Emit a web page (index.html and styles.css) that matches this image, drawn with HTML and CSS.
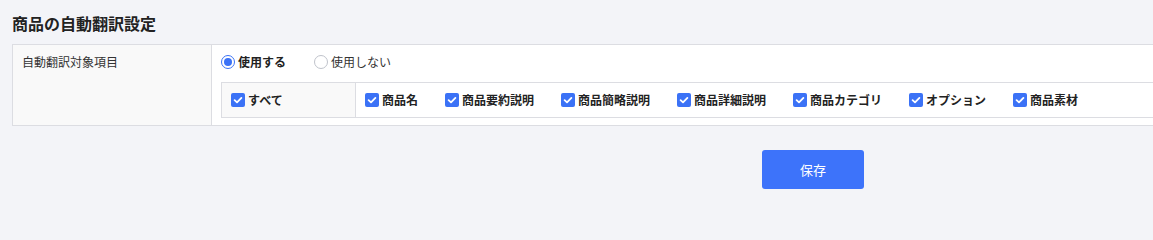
FILE: index.html
```html
<!DOCTYPE html>
<html lang="ja">
<head>
<meta charset="utf-8">
<title>商品の自動翻訳設定</title>
<link rel="stylesheet" href="styles.css">
</head>
<body>
<div class="viewport">
<div class="page">
  <h1 class="title">商品の自動翻訳設定</h1>
  <div class="form-table">
    <div class="label-cell">自動翻訳対象項目</div>
    <div class="value-cell">
      <div class="radio-row">
        <label class="radio checked"><span class="radio-dot"></span><span class="radio-text">使用する</span></label>
        <label class="radio"><span class="radio-dot"></span><span class="radio-text">使用しない</span></label>
      </div>
      <div class="check-table">
        <div class="check-all">
          <label class="check"><span class="box"><svg viewBox="0 0 14 14"><path d="M3.6 7.2 L6 9.4 L10.4 4.9" /></svg></span><span class="check-text">すべて</span></label>
        </div>
        <div class="check-items">
          <label class="check"><span class="box"><svg viewBox="0 0 14 14"><path d="M3.6 7.2 L6 9.4 L10.4 4.9" /></svg></span><span class="check-text">商品名</span></label>
          <label class="check"><span class="box"><svg viewBox="0 0 14 14"><path d="M3.6 7.2 L6 9.4 L10.4 4.9" /></svg></span><span class="check-text">商品要約説明</span></label>
          <label class="check"><span class="box"><svg viewBox="0 0 14 14"><path d="M3.6 7.2 L6 9.4 L10.4 4.9" /></svg></span><span class="check-text">商品簡略説明</span></label>
          <label class="check"><span class="box"><svg viewBox="0 0 14 14"><path d="M3.6 7.2 L6 9.4 L10.4 4.9" /></svg></span><span class="check-text">商品詳細説明</span></label>
          <label class="check"><span class="box"><svg viewBox="0 0 14 14"><path d="M3.6 7.2 L6 9.4 L10.4 4.9" /></svg></span><span class="check-text">商品カテゴリ</span></label>
          <label class="check"><span class="box"><svg viewBox="0 0 14 14"><path d="M3.6 7.2 L6 9.4 L10.4 4.9" /></svg></span><span class="check-text">オプション</span></label>
          <label class="check"><span class="box"><svg viewBox="0 0 14 14"><path d="M3.6 7.2 L6 9.4 L10.4 4.9" /></svg></span><span class="check-text">商品素材</span></label>
        </div>
      </div>
    </div>
  </div>
  <div class="actions">
    <button class="save-btn" type="button">保存</button>
  </div>
</div>
</div>
</body>
</html>
```
FILE: styles.css
```css
html, body {
  margin: 0;
  padding: 0;
  background: #f3f4f8;
}
body {
  font-family: "Noto Sans CJK JP", "Noto Sans", sans-serif;
  color: #333;
  min-height: 231px;
}
.viewport {
  width: 100%;
  overflow: hidden;
}
.page {
  width: 1602px;
  padding: 12px;
}
.title {
  margin: 0 0 10px;
  font-size: 16px;
  line-height: 22px;
  font-weight: 700;
  color: #222;
}
.form-table {
  display: grid;
  grid-template-columns: 199px 1fr;
  border: 1px solid #dcdde2;
  background: #fff;
}
.label-cell {
  background: #f9f9f9;
  border-right: 1px solid #dcdde2;
  padding: 7px 9px;
  font-size: 12px;
  line-height: 20px;
  color: #333;
}
.value-cell {
  padding: 7px 9px 7px 9px;
}
.radio-row {
  display: flex;
  align-items: center;
  gap: 28px;
  height: 20px;
  margin-bottom: 10px;
}
.radio {
  display: flex;
  align-items: center;
  gap: 3px;
  font-size: 12px;
  line-height: 20px;
  color: #333;
}
.radio-dot {
  width: 12px;
  height: 12px;
  border: 1px solid #bfc3cb;
  border-radius: 50%;
  background: #fff;
  position: relative;
}
.radio.checked .radio-dot {
  border-color: #3b72f6;
}
.radio.checked .radio-dot::after {
  content: "";
  position: absolute;
  left: 2px;
  top: 2px;
  width: 8px;
  height: 8px;
  border-radius: 50%;
  background: #3b72f6;
}
.radio.checked .radio-text {
  font-weight: 700;
  color: #222;
}
.check-table {
  display: flex;
  border: 1px solid #dcdde2;
  height: 34px;
}
.check-all {
  width: 124px;
  background: #f9f9f9;
  border-right: 1px solid #dcdde2;
  padding-left: 9px;
  display: flex;
  align-items: center;
}
.check-items {
  display: flex;
  align-items: center;
  padding-left: 9px;
  gap: 27px;
}
.check {
  display: flex;
  align-items: center;
  gap: 3px;
  font-size: 12px;
  line-height: 20px;
  font-weight: 700;
  color: #222;
}
.box {
  width: 14px;
  height: 14px;
  border-radius: 2px;
  background: #3b72f6;
  display: block;
}
.box svg {
  display: block;
  width: 14px;
  height: 14px;
}
.box path {
  fill: none;
  stroke: #fff;
  stroke-width: 1.8;
  stroke-linecap: round;
  stroke-linejoin: round;
}
.actions {
  display: flex;
  justify-content: center;
  margin-top: 24px;
}
.save-btn {
  width: 102px;
  height: 39px;
  border: none;
  border-radius: 3px;
  background: #3d73fa;
  color: #fff;
  font-family: "Noto Sans CJK JP", "Noto Sans", sans-serif;
  font-size: 13px;
  padding: 0;
}
```
